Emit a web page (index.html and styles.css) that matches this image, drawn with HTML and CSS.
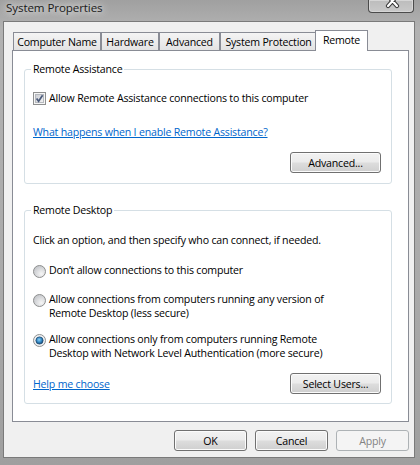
FILE: index.html
```html
<!DOCTYPE html>
<html>
<head>
<meta charset="utf-8">
<title>System Properties</title>
<link rel="stylesheet" href="styles.css">
</head>
<body>
<div class="window">
  <div class="titlebar">
    <span class="title">System Properties</span>
    <div class="close">
      <svg width="43" height="12" viewBox="0 0 43 12">
        <path d="M19 -4 L28 6 M28 -4 L19 6" stroke="#3a3a3a" stroke-width="4.2" stroke-linecap="round" fill="none"/>
        <path d="M19 -4 L28 6 M28 -4 L19 6" stroke="#ffffff" stroke-width="2.2" stroke-linecap="round" fill="none"/>
      </svg>
    </div>
  </div>
  <div class="client">
    <div class="tabs">
      <div class="tab tab-cn">Computer Name</div>
      <div class="tab tab-hw">Hardware</div>
      <div class="tab tab-adv">Advanced</div>
      <div class="tab tab-sp">System Protection</div>
      <div class="tab tab-active">Remote</div>
    </div>
    <div class="panel">
      <fieldset class="group group-assist">
        <legend>Remote Assistance</legend>
        <div class="option check-row">
          <svg class="checkbox" width="13" height="13" viewBox="0 0 13 13">
            <defs>
              <linearGradient id="cbg" x1="0" y1="0" x2="1" y2="1">
                <stop offset="0" stop-color="#c9ccd2"/>
                <stop offset="1" stop-color="#f4f4f4"/>
              </linearGradient>
            </defs>
            <rect x="0.5" y="0.5" width="12" height="12" fill="#f6f6f6" stroke="#8e8f8f"/>
            <rect x="2.5" y="2.5" width="8" height="8" fill="url(#cbg)" stroke="#b6b9be"/>
            <path d="M3.6 6.4 L5.6 9.2 L9.6 3.2" stroke="#4a5a7a" stroke-width="1.7" fill="none"/>
          </svg>
          <span>Allow Remote Assistance connections to this computer</span>
        </div>
        <a class="link link-assist" href="#">What happens when I enable Remote Assistance?</a>
        <div class="actions actions-right">
          <button class="btn btn-wide">Advanced...</button>
        </div>
      </fieldset>
      <fieldset class="group group-desktop">
        <legend>Remote Desktop</legend>
        <p class="intro">Click an option, and then specify who can connect, if needed.</p>
        <div class="option radio-row radio-first">
          <svg class="radio" width="13" height="13" viewBox="0 0 13 13">
            <defs>
              <radialGradient id="rbg" cx="0.65" cy="0.7" r="0.7">
                <stop offset="0" stop-color="#f6f6f6"/>
                <stop offset="1" stop-color="#c6c8cc"/>
              </radialGradient>
            </defs>
            <circle cx="6.5" cy="6.5" r="6" fill="url(#rbg)" stroke="#8e8f8f"/>
          </svg>
          <span>Don’t allow connections to this computer</span>
        </div>
        <div class="option radio-row radio-second">
          <svg class="radio" width="13" height="13" viewBox="0 0 13 13">
            <circle cx="6.5" cy="6.5" r="6" fill="url(#rbg)" stroke="#8e8f8f"/>
          </svg>
          <span>Allow connections from computers running any version of<br>Remote Desktop (less secure)</span>
        </div>
        <div class="option radio-row radio-third">
          <svg class="radio" width="13" height="13" viewBox="0 0 13 13">
            <defs>
              <radialGradient id="rdot" cx="0.45" cy="0.4" r="0.6">
                <stop offset="0" stop-color="#8fd0f5"/>
                <stop offset="0.6" stop-color="#2f86c2"/>
                <stop offset="1" stop-color="#18456e"/>
              </radialGradient>
            </defs>
            <circle cx="6.5" cy="6.5" r="6" fill="#eef0f2" stroke="#8e8f8f"/>
            <circle cx="6.5" cy="6.5" r="3.6" fill="url(#rdot)" stroke="#1f4b73" stroke-width="0.8"/>
          </svg>
          <span>Allow connections only from computers running Remote<br>Desktop with Network Level Authentication (more secure)</span>
        </div>
        <div class="actions actions-split">
          <a class="link" href="#">Help me choose</a>
          <button class="btn btn-wide">Select Users...</button>
        </div>
      </fieldset>
    </div>
    <div class="footer">
      <button class="btn">OK</button>
      <button class="btn">Cancel</button>
      <button class="btn btn-disabled" disabled>Apply</button>
    </div>
  </div>
</div>
</body>
</html>
```

FILE: styles.css
```css
* { box-sizing: border-box; }

html, body {
  margin: 0;
  padding: 0;
  background: #a8a8a8;
}

body {
  font-family: "Open Sans", "Noto Sans", sans-serif;
  font-size: 10.6px;
  letter-spacing: -0.2px;
  color: #000;
}

.window {
  width: 420px;
  height: 465px;
  display: flex;
  flex-direction: column;
  background: linear-gradient(180deg, #a0a0a0 0%, #b2b2b2 6%, #aaaaaa 60%, #9f9f9f 100%);
  overflow: hidden;
}

.titlebar {
  height: 21px;
  display: flex;
  align-items: flex-start;
  flex-shrink: 0;
}

.title {
  margin-left: 6px;
  font-size: 11.6px;
  letter-spacing: -0.1px;
  line-height: 16px;
  color: #1a1a1a;
  text-shadow: 0 0 6px #ececec, 0 0 10px #e0e0e0;
}

.close {
  margin-left: auto;
  margin-right: 6px;
  width: 46px;
  height: 13px;
  border: 1px solid #4b4b4b;
  border-top: none;
  border-radius: 0 0 4px 4px;
  background: linear-gradient(180deg, #bcbcbc, #c9c9c9);
  box-shadow: inset 0 0 0 1px #d6d6d6;
  overflow: hidden;
}

.close svg { display: block; }

.client {
  flex: 1;
  margin: 0 5px 7px 3px;
  border: 1px solid #7a7a7a;
  background: #f0f0f0;
  display: flex;
  flex-direction: column;
}

.tabs {
  display: flex;
  align-items: flex-end;
  height: 28px;
  padding: 8px 0 0 9px;
}

.tab {
  height: 18px;
  border: 1px solid #898c95;
  border-bottom: none;
  background: linear-gradient(180deg, #f4f4f4 0%, #ececec 50%, #e3e3e3 100%);
  text-align: center;
  line-height: 17px;
  padding-top: 1px;
  white-space: nowrap;
}

.tab-cn { width: 88px; }
.tab-hw { width: 58px; }
.tab-adv { width: 61px; }
.tab-sp { width: 97px; }

.tab.tab-active {
  width: 53px;
  height: 21px;
  margin-left: -2px;
  margin-bottom: -1px;
  padding-top: 0;
  line-height: 19px;
  background: #fff;
  position: relative;
  z-index: 1;
}

.panel {
  height: 372px;
  margin: 0 5px 0 8px;
  border: 1px solid #898c95;
  background: #fff;
  padding: 11px 16px 0 11px;
}

.group {
  margin: 0;
  border: 1px solid #d5dfe5;
  border-radius: 3px;
  padding: 0 10px 0 8px;
  min-width: 0;
}

.group legend {
  padding: 0 2px;
  margin-left: -2px;
  line-height: 14px;
}

.group-assist { padding-bottom: 10px; }

.group-desktop {
  margin-top: 19px;
  padding-bottom: 9px;
}

.option {
  display: flex;
  gap: 3px;
}

.check-row {
  margin-top: 15px;
  align-items: center;
  line-height: 14px;
}

.checkbox, .radio { flex-shrink: 0; display: block; }

.radio-row {
  align-items: flex-start;
  line-height: 13.5px;
}

.radio-row .radio { margin-top: 1px; }

.radio-first { margin-top: 17px; }
.radio-second { margin-top: 15px; }
.radio-third { margin-top: 13px; }

.link {
  color: #0066cc;
  text-decoration: underline;
  line-height: 14px;
}

.link-assist {
  display: block;
  margin-top: 20px;
  width: max-content;
}

.intro {
  margin: 16px 0 0;
  line-height: 14px;
}

.actions {
  display: flex;
  align-items: center;
  margin-top: 13px;
}

.actions-right { justify-content: flex-end; }
.actions-split { justify-content: space-between; }

.btn {
  height: 21px;
  width: 73px;
  padding: 0;
  font-family: inherit;
  font-size: 10.6px;
  letter-spacing: -0.2px;
  color: #000;
  border: 1px solid #707070;
  border-radius: 3px;
  background: linear-gradient(180deg, #f2f2f2 0%, #ebebeb 48%, #dddddd 52%, #cfcfcf 100%);
  box-shadow: inset 0 0 0 1px #fbfbfb;
  line-height: 18px;
}

.btn-wide { width: 91px; }

.btn-disabled {
  border-color: #adb2b5;
  background: #f4f4f4;
  box-shadow: none;
  color: #838383;
}

.footer {
  display: flex;
  justify-content: flex-end;
  gap: 8px;
  margin: 8px 5px 0 0;
}
```
